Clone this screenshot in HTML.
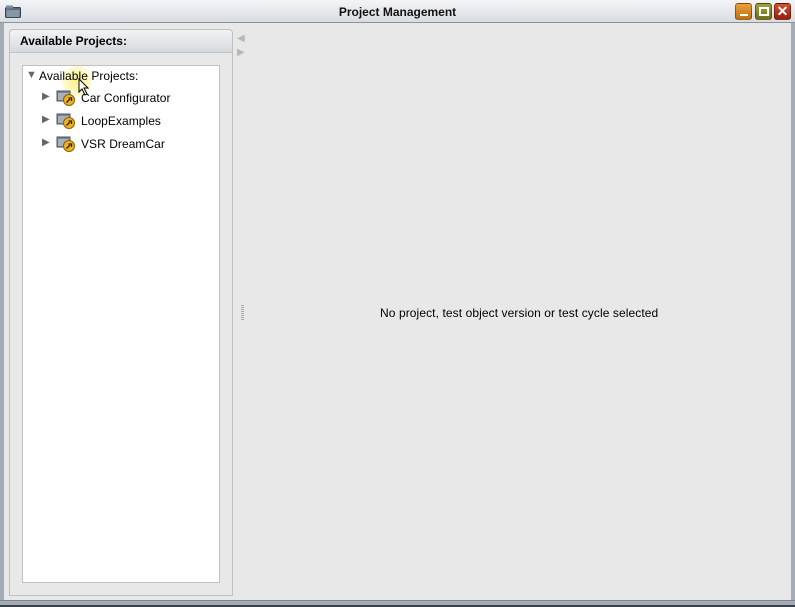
<!DOCTYPE html>
<html><head><style>
*{margin:0;padding:0;box-sizing:border-box}
body{width:795px;height:607px;overflow:hidden;background:#e8e8e8;font-family:"Liberation Sans",sans-serif;position:relative}
.abs{position:absolute}
.title{left:0;top:0;width:795px;height:23px;background:linear-gradient(#f4f5f7,#d9dce2);border-bottom:1px solid #8b93a0;font-size:12px;font-weight:bold;color:#111;text-align:center;line-height:25px}
.btn{top:3px;width:17px;height:17px;border-radius:3px;border:1px solid rgba(0,0,0,.35)}
.tb{font-size:12px;color:#000;white-space:nowrap;letter-spacing:0.05px}
</style></head><body>
<div class="abs title">Project Management</div>
<svg class="abs" style="left:5px;top:5px" width="17" height="13"><rect x="0.5" y="2.5" width="15" height="10" rx="1" fill="#5b6b7a" stroke="#3a4552"/><rect x="1" y="0.5" width="7" height="3" fill="#7d8c9a"/><rect x="1.5" y="5" width="13" height="7" fill="#8897a5"/></svg>
<div class="abs btn" style="left:735px;background:linear-gradient(#e8a040,#c07010)"><div class="abs" style="left:4px;top:10px;width:8px;height:2px;background:#fff"></div></div>
<div class="abs btn" style="left:755px;background:linear-gradient(#a0a040,#707018)"><div class="abs" style="left:3px;top:3px;width:10px;height:9px;border:2px solid #fff"></div></div>
<div class="abs btn" style="left:774px;background:linear-gradient(#d05030,#982010);color:#fff;font-weight:bold;font-size:14px;line-height:15px;text-align:center">✕</div>
<div class="abs" style="left:0;top:23px;width:4px;height:580px;background:#a4acb8"></div>
<div class="abs" style="left:791px;top:23px;width:4px;height:580px;background:#a4acb8"></div>
<div class="abs" style="left:0;top:600px;width:795px;height:5px;background:#a4acb8;border-top:1px solid #7d8490"></div>
<div class="abs" style="left:0;top:605px;width:795px;height:2px;background:#3a3f47"></div>
<div class="abs" style="left:9px;top:29px;width:224px;height:567px;border:1px solid #c0c0c0;border-radius:4px 4px 0 0"></div>
<div class="abs" style="left:10px;top:30px;width:222px;height:23px;background:linear-gradient(#f2f3f5,#d5d9df);border-bottom:1px solid #c0c4ca;border-radius:4px 4px 0 0;font-size:12px;font-weight:bold;line-height:23px;padding-left:10px">Available Projects:</div>
<div class="abs" style="left:22px;top:65px;width:198px;height:518px;background:#fff;border:1px solid #c0c0c0"></div>
<div class="abs" style="left:62px;top:66px;width:30px;height:30px;border-radius:50%;background:radial-gradient(rgba(250,240,120,.9),rgba(250,240,120,.3) 70%,transparent 72%)"></div>
<div class="abs" style="left:26px;top:69px;font-size:11px;color:#666">▼</div>
<div class="abs tb" style="left:39px;top:69px">Available Projects:</div>
<div class="abs" style="left:42px;top:91px;font-size:10px;color:#666">▶</div>
<div class="abs" style="left:42px;top:114px;font-size:10px;color:#666">▶</div>
<div class="abs" style="left:42px;top:137px;font-size:10px;color:#666">▶</div>
<svg class="abs" style="left:56px;top:89px" width="20" height="64">
<g id="f"><rect x="1" y="2" width="13" height="10" fill="#7a8590" stroke="#4c5560"/><rect x="2" y="4" width="11" height="7" fill="#a8b0b8"/><circle cx="13" cy="11" r="5.5" fill="#f0b020" stroke="#8a6000"/><path d="M10.5 13.5 L14 10 M12.5 9 L15.5 9 L15.5 12" stroke="#222" stroke-width="1.3" fill="none"/></g>
<use href="#f" y="23"/><use href="#f" y="46"/></svg>
<div class="abs tb" style="left:81px;top:91px">Car Configurator</div>
<div class="abs tb" style="left:81px;top:114px">LoopExamples</div>
<div class="abs tb" style="left:81px;top:137px">VSR DreamCar</div>
<svg class="abs" style="left:78px;top:78px" width="14" height="18"><path d="M1 1 L1 14 L4 11 L7 17 L9 16 L6 10 L10 10 Z" fill="#fff" stroke="#000"/></svg>
<div class="abs" style="left:237px;top:33px;font-size:10px;color:#b8b8b8">◀</div>
<div class="abs" style="left:237px;top:47px;font-size:10px;color:#b8b8b8">▶</div>
<div class="abs" style="left:241px;top:305px;width:3px;height:15px;background:repeating-linear-gradient(#a8a8a8 0 1px,transparent 1px 2px)"></div>
<div class="abs tb" style="left:380px;top:306px;letter-spacing:0.09px">No project, test object version or test cycle selected</div>
</body></html>
